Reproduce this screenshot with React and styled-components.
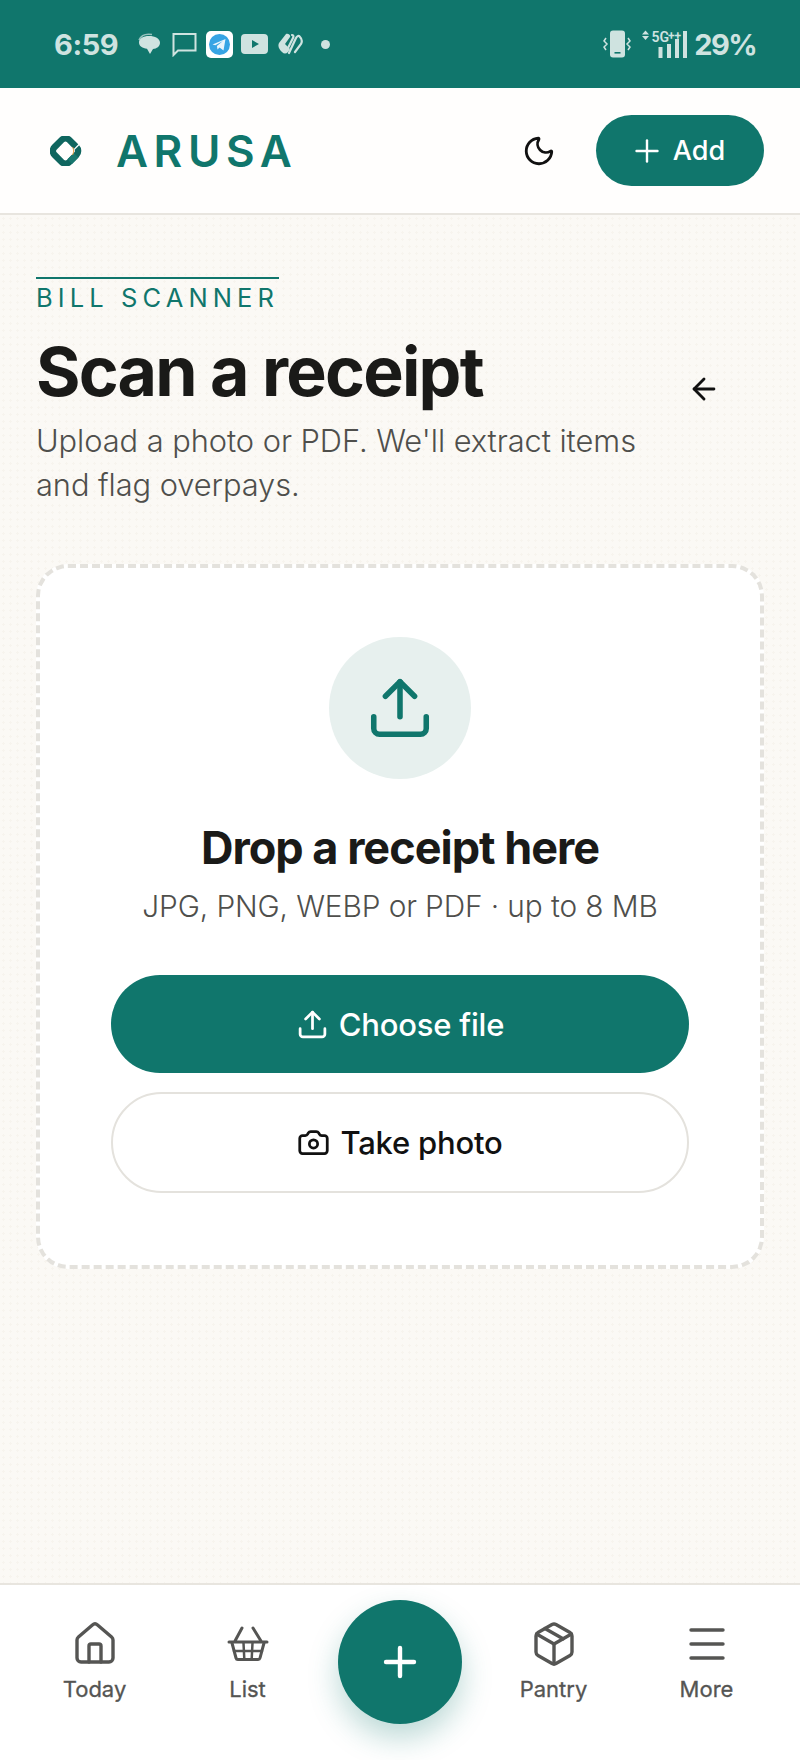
import React from 'react'
import styled, { createGlobalStyle } from 'styled-components'
import { Moon, Plus, ArrowLeft, Upload, Camera, House, Package, Menu } from 'lucide-react'

const GlobalStyle = createGlobalStyle`
  html, body { margin: 0; padding: 0; }
  body { font-family: "Inter", "Liberation Sans", sans-serif; background: #fbf9f5; }
  * { box-sizing: border-box; }
`

const TEAL = '#10766c'

const Page = styled.div`
  width: 800px;
  height: 1760px;
  display: flex;
  flex-direction: column;
  overflow: hidden;
`

const StatusBar = styled.div`
  height: 88px;
  flex: none;
  background: ${TEAL};
  color: #cfe3e0;
  display: flex;
  align-items: center;
  justify-content: space-between;
  padding: 0 44px 0 54px;
`

const StatusGroup = styled.div`
  display: flex;
  align-items: center;
`

const Clock = styled.span`
  font-size: 29px;
  font-weight: 700;
  letter-spacing: -0.4px;
  margin-right: 19px;
`

const Battery = styled.span`
  font-size: 29px;
  font-weight: 700;
  letter-spacing: -1.6px;
  margin-left: 7px;
`

const NotifIcon = styled.svg`
  display: block;
  margin-right: ${p => p.$gap ?? 6}px;
`

const Header = styled.header`
  height: 127px;
  flex: none;
  background: #fffefd;
  border-bottom: 2px solid #e8e5df;
  display: flex;
  align-items: center;
  padding: 0 36px 0 50px;
`

const Brand = styled.div`
  display: flex;
  align-items: center;
  gap: 32px;
  flex: 1;
`

const BrandName = styled.span`
  font-size: 44px;
  font-weight: 600;
  letter-spacing: 5.6px;
  color: ${TEAL};
  line-height: 1;
`

const ThemeButton = styled.button`
  border: 0;
  background: none;
  padding: 0;
  margin-right: 40px;
  display: flex;
  color: #111;
`

const AddButton = styled.button`
  width: 168px;
  height: 71px;
  border: 0;
  border-radius: 36px;
  padding: 0 6px 0 0;
  background: ${TEAL};
  color: #fff;
  font: 500 27px "Inter", sans-serif;
  display: flex;
  align-items: center;
  justify-content: center;
  gap: 8px;
`

const Main = styled.main`
  flex: 1;
  padding: 62px 36px 0;
  background-color: #fbf9f5;
  background-image: radial-gradient(#f7f4ee 1.2px, transparent 1.3px);
  background-size: 7px 7px;
`

const TitleRow = styled.div`
  display: flex;
  align-items: center;
  justify-content: space-between;
  height: 233px;
`

const TitleBlock = styled.div`
  width: 624px;
  align-self: flex-start;
`

const Eyebrow = styled.div`
  display: inline-block;
  border-top: 2px solid ${TEAL};
  padding-top: 3px;
  width: 243px;
  font-size: 25.5px;
  line-height: 32px;
  font-weight: 400;
  letter-spacing: 5.1px;
  color: ${TEAL};
  white-space: nowrap;
`

const Title = styled.h1`
  margin: 19px 0 0;
  font-size: 68px;
  line-height: 76px;
  font-weight: 700;
  letter-spacing: -1.8px;
  color: #1a1a18;
`

const Subtitle = styled.p`
  margin: 10px 0 0;
  font-size: 30.8px;
  line-height: 44px;
  font-weight: 300;
  letter-spacing: -0.05px;
  color: #4f4f4c;
`

const BackButton = styled.button`
  border: 0;
  background: none;
  padding: 0;
  margin: 0 43px 10px 0;
  display: flex;
  color: #111;
`

const DropCard = styled.section`
  margin-top: 54px;
  height: 705px;
  background: #fff;
  border: 4px dashed #e4e2dd;
  border-radius: 32px;
  padding: 69px 71px 0;
  display: flex;
  flex-direction: column;
  align-items: center;
`

const IconCircle = styled.div`
  width: 142px;
  height: 142px;
  border-radius: 50%;
  background: #e7f0ee;
  color: ${TEAL};
  display: flex;
  align-items: center;
  justify-content: center;
`

const DropTitle = styled.h2`
  margin: 43px 0 0;
  font-size: 45px;
  line-height: 52px;
  font-weight: 700;
  letter-spacing: -1px;
  color: #1a1a18;
`

const DropHint = styled.p`
  margin: 10px 0 0;
  font-size: 29.8px;
  line-height: 44px;
  font-weight: 300;
  letter-spacing: -0.1px;
  color: #4f4f4c;
  white-space: nowrap;
`

const ActionButton = styled.button`
  width: 578px;
  height: ${p => (p.$primary ? 98 : 101)}px;
  margin-top: ${p => (p.$primary ? 47 : 19)}px;
  border-radius: 52px;
  border: ${p => (p.$primary ? '0' : '2px solid #e4e2dd')};
  background: ${p => (p.$primary ? TEAL : '#fff')};
  color: ${p => (p.$primary ? '#fff' : '#111')};
  font: 500 31px "Inter", sans-serif;
  letter-spacing: -0.2px;
  display: flex;
  align-items: center;
  justify-content: center;
  gap: 10px;
`

const BottomNav = styled.nav`
  height: 177px;
  flex: none;
  background: #fff;
  border-top: 2px solid #e8e5df;
  display: grid;
  grid-template-columns: repeat(5, 153px);
  padding: 0 17px 0 18px;
  position: relative;
`

const NavItem = styled.a`
  display: flex;
  flex-direction: column;
  align-items: center;
  padding-top: 35px;
  color: #555553;
  font-size: 22px;
  font-weight: 400;
  -webkit-text-stroke: 0.3px #555553;
  line-height: 30px;
  gap: 6px;
`

const NavGlyph = styled.span`
  height: 48px;
  display: flex;
  align-items: center;
  justify-content: center;
`

const Fab = styled.button`
  position: absolute;
  left: 338px;
  top: 15px;
  width: 124px;
  height: 124px;
  border: 0;
  border-radius: 50%;
  background: ${TEAL};
  color: #fff;
  display: flex;
  align-items: center;
  justify-content: center;
  box-shadow: 0 14px 30px rgba(16, 118, 108, 0.28);
`

const ChatIcon = () => (
  <NotifIcon width="24" height="24" viewBox="0 0 24 24" $gap={11}>
    <path d="M2 8C4 3.500 9 1.500 15 2.500" fill="none" stroke="currentColor" strokeWidth="1.600" opacity=".7" />
    <path d="M12 4C18 4 23 6.600 23 10.800c0 3.600-3.300 6-7 6.200L13 22l-3-5.200C5.500 16 2 14 2 10.400 2 6.600 6 4 12 4Z" fill="currentColor" />
  </NotifIcon>
)

const MessageIcon = () => (
  <NotifIcon width="25" height="25" viewBox="0 0 25 25" $gap={9}>
    <path d="M1.500 23V2h22v16.500H6L1.500 23Z" fill="none" stroke="currentColor" strokeWidth="2" />
  </NotifIcon>
)

const TelegramIcon = () => (
  <NotifIcon width="27" height="27" viewBox="0 0 27 27" $gap={8}>
    <rect width="27" height="27" rx="5" fill="#fff" />
    <circle cx="13.500" cy="13.500" r="10.500" fill="#37a4e4" />
    <path d="M6.500 13.500 19.500 8l-2 11.500-4-3-2 2-.6-3.600 6-5-7.600 4.400-2.800-.8Z" fill="#eaf5fc" />
  </NotifIcon>
)

const YoutubeIcon = () => (
  <NotifIcon width="27" height="20" viewBox="0 0 27 20" $gap={10}>
    <path fillRule="evenodd" d="M4 0h19a4 4 0 0 1 4 4v12a4 4 0 0 1-4 4H4a4 4 0 0 1-4-4V4a4 4 0 0 1 4-4Zm7 6v8l7-4-7-4Z" fill="currentColor" />
  </NotifIcon>
)

const SwirlIcon = () => (
  <NotifIcon width="25" height="22" viewBox="0 0 25 22" $gap={18}>
    <path d="M8 1 1 10c-1.500 3 0 6 3 9 2 2 4 2 6 0l2-3-5-5 5-7c1-2-2-4-4-3Z" fill="currentColor" />
    <path d="M11 20 18 5c1-2 3-3 4-1 2 2 2 5 1 7l-6 8M14 2c1 0 2 1 1 3L10 15" fill="none" stroke="currentColor" strokeWidth="2.200" strokeLinecap="round" />
  </NotifIcon>
)

const DotIcon = () => (
  <NotifIcon width="9" height="9" viewBox="0 0 9 9" $gap={0}>
    <circle cx="4.500" cy="4.500" r="4.500" fill="currentColor" />
  </NotifIcon>
)

const VibrateIcon = () => (
  <NotifIcon width="28" height="28" viewBox="0 0 28 28" $gap={11}>
    <rect x="7" y="0.500" width="15" height="27" rx="3" fill="currentColor" />
    <rect x="11.500" y="22" width="6" height="1.600" fill={TEAL} />
    <path d="M3 8 1 11l3 3-3 3 2 3M25 8l2 3-3 3 3 3-2 3" fill="none" stroke="currentColor" strokeWidth="1.500" />
  </NotifIcon>
)

const SignalText = styled.text`
  font: 600 ${p => p.$size}px "Roboto", sans-serif;
  fill: currentColor;
`

const SignalIcon = () => (
  <NotifIcon width="45" height="28" viewBox="0 0 45 28" $gap={0}>
    <path d="M0 4.500 3.500 0.500 7 4.500H0ZM0 6h7L3.500 10 0 6Z" fill="currentColor" />
    <SignalText $size={14} x="9.500" y="12">5G</SignalText>
    <SignalText $size={12} x="26" y="10">++</SignalText>
    <rect x="16.500" y="17" width="4" height="11" fill="currentColor" />
    <rect x="25" y="14" width="4" height="14" fill="currentColor" />
    <rect x="33" y="9" width="4" height="19" fill="currentColor" />
    <rect x="41" y="1" width="4" height="27" fill="currentColor" />
  </NotifIcon>
)

const Logo = () => (
  <svg width="34" height="30" viewBox="0 0 34 30" fill="none">
    <g transform="rotate(45 15.500 15)">
      <rect x="5" y="4.500" width="21" height="21" rx="5.500" stroke="#0f665f" strokeWidth="6.500" />
      <path d="M26 10.500v9" stroke="#17776e" strokeWidth="6.500" />
      <path d="M20.500 0.500v7.500" stroke="#fff" strokeWidth="1.300" />
    </g>
    <path d="M22.500 11c1.500 2.500 1.500 5.500 0 8" stroke="#e0a04a" strokeWidth="1" />
  </svg>
)

const BasketIcon = () => (
  <svg width="44" height="36" viewBox="0 0 44 36" fill="none" stroke="currentColor" strokeWidth="3" strokeLinecap="round" strokeLinejoin="round">
    <path d="M16 2 9 15M27 2l8 13M3 16h38" />
    <path d="M6 17l4 15a2 2 0 0 0 2 1.500h20a2 2 0 0 0 2-1.500l4-15" />
    <path d="M8 25h28M17.500 17l.8 16M26.500 17l-.8 16" strokeWidth="2.500" />
  </svg>
)

const App = () => {
  return (
    <Page>
      <GlobalStyle />
      <StatusBar>
        <StatusGroup>
          <Clock>6:59</Clock>
          <ChatIcon />
          <MessageIcon />
          <TelegramIcon />
          <YoutubeIcon />
          <SwirlIcon />
          <DotIcon />
        </StatusGroup>
        <StatusGroup>
          <VibrateIcon />
          <SignalIcon />
          <Battery>29%</Battery>
        </StatusGroup>
      </StatusBar>

      <Header>
        <Brand>
          <Logo />
          <BrandName>ARUSA</BrandName>
        </Brand>
        <ThemeButton aria-label="Toggle theme"><Moon size={34} strokeWidth={2} /></ThemeButton>
        <AddButton><Plus size={36} strokeWidth={1.6} />Add</AddButton>
      </Header>

      <Main>
        <TitleRow>
          <TitleBlock>
            <Eyebrow>BILL SCANNER</Eyebrow>
            <Title>Scan a receipt</Title>
            <Subtitle>Upload a photo or PDF. We'll extract items and flag overpays.</Subtitle>
          </TitleBlock>
          <BackButton aria-label="Back"><ArrowLeft size={34} strokeWidth={2} /></BackButton>
        </TitleRow>

        <DropCard>
          <IconCircle><Upload size={70} strokeWidth={1.9} /></IconCircle>
          <DropTitle>Drop a receipt here</DropTitle>
          <DropHint>JPG, PNG, WEBP or PDF · up to 8 MB</DropHint>
          <ActionButton $primary><Upload size={33} strokeWidth={2} />Choose file</ActionButton>
          <ActionButton><Camera size={33} strokeWidth={2} />Take photo</ActionButton>
        </DropCard>
      </Main>

      <BottomNav>
        <NavItem><NavGlyph><House size={48} strokeWidth={1.7} /></NavGlyph>Today</NavItem>
        <NavItem><NavGlyph><BasketIcon /></NavGlyph>List</NavItem>
        <span />
        <NavItem><NavGlyph><Package size={48} strokeWidth={1.7} /></NavGlyph>Pantry</NavItem>
        <NavItem><NavGlyph><Menu size={48} strokeWidth={1.7} /></NavGlyph>More</NavItem>
        <Fab aria-label="Add"><Plus size={48} strokeWidth={2.2} /></Fab>
      </BottomNav>
    </Page>
  )
}

export default App
